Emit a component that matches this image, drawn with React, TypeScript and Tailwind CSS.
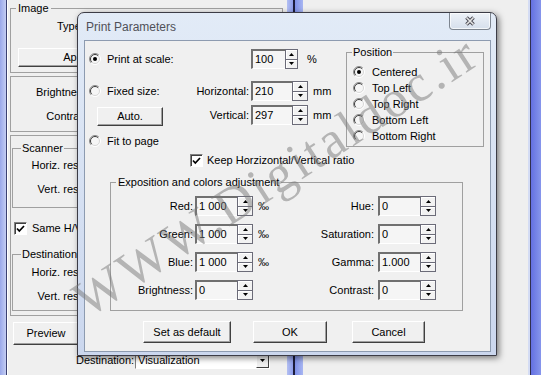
import React from 'react';

function Radio({ checked }: { checked?: boolean }) {
  return (
    <svg width="12" height="12" viewBox="0 0 12 12" className="shrink-0">
      <circle cx="6" cy="6" r="5.5" fill="#f6f6f6" />
      <path d="M2.1 9.9A5.5 5.5 0 0 1 9.9 2.1" fill="none" stroke="#8c8c8c" />
      <path d="M9.9 2.1A5.5 5.5 0 0 1 2.1 9.9" fill="none" stroke="#ffffff" />
      <path d="M2.8 9.2A4.5 4.5 0 0 1 9.2 2.8" fill="none" stroke="#3c3c3c" />
      <path d="M9.2 2.8A4.5 4.5 0 0 1 2.8 9.2" fill="none" stroke="#d8d8d8" />
      {checked && <circle cx="6" cy="6" r="2" fill="#000" />}
    </svg>
  );
}

function Check() {
  return (
    <span className="flex h-[13px] w-[13px] shrink-0 items-center justify-center border border-t-[#808080] border-l-[#808080] border-r-white border-b-white bg-white shadow-[inset_1px_1px_0_#404040]">
      <svg width="9" height="8" viewBox="0 0 9 8">
        <path d="M1 3.5 L3.3 6 L8 1" fill="none" stroke="#000" strokeWidth="1.7" />
      </svg>
    </span>
  );
}

function Arrow({ up }: { up?: boolean }) {
  return (
    <svg width="5" height="3" viewBox="0 0 5 3">
      <path d={up ? 'M0 3 L2.5 0 L5 3Z' : 'M0 0 L2.5 3 L5 0Z'} fill="#000" />
    </svg>
  );
}

function Spin({ value, className, spin = 'w-[16px]' }: { value: string; className: string; spin?: string }) {
  return (
    <div className={`flex h-[20px] ${className}`}>
      <div className="flex-1 border-t-2 border-l-2 border-b border-t-[#707070] border-l-[#707070] border-b-white bg-[#f5f5f5] pl-[2px] text-[11px] leading-[16px]">
        {value}
      </div>
      <div className={`flex flex-col border border-[#6b6b78] ${spin}`}>
        <div className="flex flex-1 items-center justify-center border-b border-[#6b6b78] bg-[#f2f2f2] shadow-[inset_1px_1px_0_#fff]">
          <Arrow up />
        </div>
        <div className="flex flex-1 items-center justify-center bg-[#f2f2f2] shadow-[inset_1px_1px_0_#fff]">
          <Arrow />
        </div>
      </div>
    </div>
  );
}

function Btn({ className, children }: { className: string; children: React.ReactNode }) {
  return (
    <div
      className={`flex items-center justify-center border border-t-white border-l-white border-r-[#404040] border-b-[#404040] bg-[#f0f0f0] shadow-[inset_-1px_-1px_0_#a0a0a0] ${className}`}
    >
      {children}
    </div>
  );
}

function ColorRow({ label, value, right, rightValue, permille = true }: { label: string; value: string; right: string; rightValue: string; permille?: boolean }) {
  return (
    <div className="flex h-[20px] items-center">
      <div className="w-[84px] pr-[2px] text-right">{label}</div>
      <Spin value={value} className="w-[58px]" />
      <div className="w-[60px] pl-[5px]">{permille ? '‰' : ''}</div>
      <div className="w-[65px] pr-[4px] text-right">{right}</div>
      <Spin value={rightValue} className="w-[58px]" />
    </div>
  );
}

function Background() {
  return (
    <div className="flex h-[375px] w-[541px] bg-[#efefef]">
      <div className="flex w-[8px]">
        <div className="w-[6px] bg-linear-to-r from-[#9aa8ea] to-[#c4cdf2]" />
        <div className="w-[1px] bg-[#3a4070]" />
        <div className="w-[1px] bg-white" />
      </div>

      <div className="flex w-[279px] flex-col">
        <fieldset className="ml-[2px] mt-[2px] h-[71px] w-[273px] border border-[#a0a0a0]">
          <legend className="ml-[5px] px-[2px] leading-[13px]">Image</legend>
          <div className="mt-[5px] pl-[46px] leading-[13px]">Type:</div>
          <Btn className="ml-[7px] mt-[15px] h-[19px] w-[118px]">Apply</Btn>
        </fieldset>

        <div className="ml-[2px] mt-[3px] h-[56px] w-[275px] border border-[#a0a0a0] pt-[9px]">
          <div className="w-[80px] text-right leading-[13px]">Brightness:</div>
          <div className="mt-[11px] w-[80px] text-right leading-[13px]">Contrast:</div>
        </div>

        <div className="ml-[2px] mt-[3px] h-[181px] w-[275px] border border-[#a0a0a0]">
          <fieldset className="ml-[1px] mt-[6px] h-[66px] w-[268px] border border-[#a0a0a0]">
            <legend className="ml-[8px] px-[1px] leading-[13px]">Scanner</legend>
            <div className="mt-[4px] w-[101px] text-right leading-[13px]">Horiz. resolution:</div>
            <div className="mt-[11px] w-[101px] text-right leading-[13px]">Vert. resolution:</div>
          </fieldset>
          <div className="ml-[3px] mt-[14px] flex items-center gap-[5px]">
            <Check />
            <span className="leading-[13px]">Same H/V resolution</span>
          </div>
          <fieldset className="ml-[1px] mt-[13px] h-[63px] w-[268px] border border-[#a0a0a0]">
            <legend className="ml-[8px] px-[1px] leading-[13px]">Destination</legend>
            <div className="mt-[5px] w-[101px] text-right leading-[13px]">Horiz. resolution:</div>
            <div className="mt-[11px] w-[101px] text-right leading-[13px]">Vert. resolution:</div>
          </fieldset>
        </div>

        <Btn className="ml-[5px] mt-[6px] h-[23px] w-[66px]">Preview</Btn>

        <div className="ml-[68px] mt-[6px] flex items-center gap-[4px]">
          <span className="w-[55px] leading-[13px]">Destination:</span>
          <div className="flex h-[18px] w-[135px] border border-t-[#808080] border-l-[#808080] border-r-white border-b-white bg-white">
            <div className="flex-1 pl-[2px] leading-[16px]">Visualization</div>
            <div className="flex w-[13px] items-center justify-center border border-t-white border-l-white border-r-[#404040] border-b-[#404040] bg-[#f0f0f0]">
              <Arrow />
            </div>
          </div>
        </div>
      </div>

      <div className="flex w-[16px]">
        <div className="w-[6px] bg-linear-to-r from-[#b4c0f2] to-[#8d9cea]" />
        <div className="w-[2px] bg-[#1c1c3c]" />
        <div className="w-[8px] bg-linear-to-r from-[#7f90e8] to-[#a8b6f2]" />
      </div>

      <div className="flex-1" />

      <div className="flex w-[13px]">
        <div className="w-[2px] bg-[#d4dcf4]" />
        <div className="w-[1px] bg-[#303050]" />
        <div className="flex-1 bg-linear-to-r from-[#6470e2] to-[#8796ec]" />
      </div>
    </div>
  );
}

function Dialog() {
  return (
    <div className="absolute left-[77px] top-[12px] flex h-[344px] w-[420px] flex-col rounded-t-[7px] border border-[#3c3c46] bg-linear-to-b from-[#e2ebf7] to-[#cbd7ee] shadow-[2px_2px_6px_rgba(0,0,0,0.5)]">
      <div className="flex h-[27px] items-center justify-between pl-[8px]">
        <span className="text-[12px] text-[#505058]">Print Parameters</span>
        <div className="mr-[5px] flex h-[17px] w-[42px] items-center justify-center self-start rounded-b-[4px] border border-t-0 border-[#7d8590] bg-linear-to-b from-[#eef2f8] to-[#d6dfec] shadow-[inset_0_0_0_1px_rgba(255,255,255,0.7)]">
          <svg width="14" height="10" viewBox="0 0 14 10">
            <path d="M3.5 1.5 L10.5 8.5 M10.5 1.5 L3.5 8.5" stroke="#4b4b55" strokeWidth="3.6" />
            <path d="M3.5 1.5 L10.5 8.5 M10.5 1.5 L3.5 8.5" stroke="#e6e6e6" strokeWidth="1.6" />
          </svg>
        </div>
      </div>

      <div className="ml-[6px] mr-[5px] h-[312px] border border-[#8d9bb0] bg-[#f0f0f0]">
        <div className="flex items-start">
          <div className="w-[261px]">
            <div className="mt-[8px] flex h-[20px] items-center">
              <div className="flex w-[166px] items-center gap-[6px] pl-[4px]">
                <Radio checked />
                <span>Print at scale:</span>
              </div>
              <Spin value="100" className="w-[47px]" spin="w-[13px]" />
              <span className="ml-[9px]">%</span>
            </div>
            <div className="mt-[12px] flex h-[20px] items-center">
              <div className="flex w-[104px] items-center gap-[6px] pl-[4px]">
                <Radio />
                <span>Fixed size:</span>
              </div>
              <div className="w-[60px] text-right">Horizontal:</div>
              <Spin value="210" className="ml-[2px] w-[57px]" />
              <span className="ml-[5px]">mm</span>
            </div>
            <div className="mt-[4px] flex h-[20px] items-start">
              <div className="w-[104px] pl-[12px] pt-[2px]">
                <Btn className="h-[19px] w-[66px]">Auto.</Btn>
              </div>
              <div className="w-[60px] self-center text-right">Vertical:</div>
              <Spin value="297" className="ml-[2px] w-[57px]" />
              <span className="ml-[5px] self-center">mm</span>
            </div>
            <div className="mt-[10px] flex h-[12px] items-center gap-[6px] pl-[4px]">
              <Radio />
              <span>Fit to page</span>
            </div>
          </div>

          <fieldset className="mt-[5px] h-[101px] w-[138px] border border-[#a0a0a0]">
            <legend className="ml-[5px] px-[1px] leading-[13px]">Position</legend>
            <div className="mt-[5px] flex flex-col pl-[6px]">
              {['Centered', 'Top Left', 'Top Right', 'Bottom Left', 'Bottom Right'].map((p, i) => (
                <div key={p} className="flex h-[16px] items-center gap-[7px]">
                  <Radio checked={i === 0} />
                  <span>{p}</span>
                </div>
              ))}
            </div>
          </fieldset>
        </div>

        <div className="mt-[7px] flex items-center gap-[4px] pl-[105px]">
          <Check />
          <span className="leading-[13px]">Keep Horzizontal/Vertical ratio</span>
        </div>

        <fieldset className="ml-[25px] mt-[9px] h-[135px] w-[353px] border border-[#a0a0a0]">
          <legend className="ml-[5px] px-[2px] leading-[13px]">Exposition and colors adjustment</legend>
          <div className="mt-[7px] flex flex-col gap-[8px]">
            <ColorRow label="Red:" value="1 000" right="Hue:" rightValue="0" />
            <ColorRow label="Green:" value="1 000" right="Saturation:" rightValue="0" />
            <ColorRow label="Blue:" value="1 000" right="Gamma:" rightValue="1.000" />
            <ColorRow label="Brightness:" value="0" right="Contrast:" rightValue="0" permille={false} />
          </div>
        </fieldset>

        <div className="mt-[10px] flex pl-[58px]">
          <Btn className="h-[22px] w-[88px]">Set as default</Btn>
          <Btn className="ml-[22px] h-[22px] w-[74px]">OK</Btn>
          <Btn className="ml-[25px] h-[22px] w-[73px]">Cancel</Btn>
        </div>
      </div>
    </div>
  );
}

export default function App() {
  return (
    <div className="relative h-[375px] w-[541px] overflow-hidden font-['Liberation_Sans',Arial,sans-serif] text-[11px] text-black">
      <Background />
      <Dialog />
      <div className="pointer-events-none absolute left-[276px] top-[176px] -translate-x-1/2 -translate-y-1/2 rotate-[-33deg] whitespace-nowrap font-['Liberation_Serif',serif] text-[52px] leading-none tracking-[3px] text-[rgba(120,120,120,0.5)]">
        WWW.Digitaldoc.ir
      </div>
    </div>
  );
}
